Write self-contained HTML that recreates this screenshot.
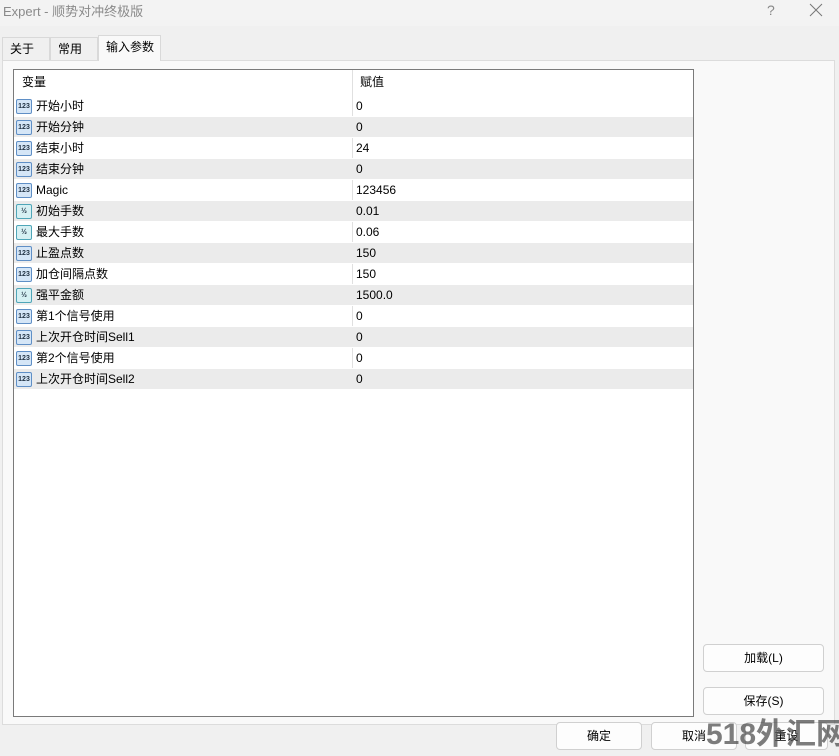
<!DOCTYPE html>
<html><head><meta charset="utf-8"><style>
*{margin:0;padding:0;box-sizing:border-box}
body{width:839px;height:756px;background:#f0f0f0;font-family:"Liberation Sans","Noto Sans CJK SC",sans-serif;font-size:12px;color:#000;position:relative;overflow:hidden}
.title{position:absolute;left:0;top:0;width:839px;height:26px;background:#f3f3f3;color:#8a8a8a;font-size:13px;line-height:24px;padding-left:3px}
.q{position:absolute;left:767px;top:2px;color:#888;font-size:14px}
.x{position:absolute;left:809px;top:3px;width:14px;height:14px}
.tab{position:absolute;top:37px;height:24px;line-height:22px;border:1px solid #d9d9d9;border-bottom:none;background:#f0f0f0;padding-left:7px}
.panel{position:absolute;left:2px;top:60px;width:833px;height:665px;background:#f9f9f9;border:1px solid #dcdcdc}
.tbl{position:absolute;left:13px;top:69px;width:681px;height:648px;background:#fff;border:1px solid #7a7a7a}
.hd{position:absolute;left:0;top:0;width:679px;height:25px;line-height:25px}
.row{position:absolute;left:0;width:679px;height:21px;line-height:21px;border-bottom:1px solid #fff}
.row.g{background:#ebebeb}
.c1{position:absolute;left:22px}
.c2{position:absolute;left:342px}
.sep{position:absolute;left:338px;top:0;width:1px;height:320px;background:#e0e0e0}
.ic{position:absolute;left:2px;top:3px;width:16px;height:15px;border:1px solid #5f8fc6;background:#d5e6f7;border-radius:2px;font-size:7px;line-height:13px;text-align:center;color:#234;font-weight:bold}
.ic.v{border-color:#4fa6b8;background:#d6f0f3}
.btn{position:absolute;height:28px;background:#fdfdfd;border:1px solid #d0d0d0;border-radius:4px;text-align:center;line-height:26px}
.wm{position:absolute;left:706px;top:715px;font-size:30px;font-weight:bold;color:rgba(80,80,80,.75);white-space:nowrap;line-height:40px}
</style></head><body>
<div class="title">Expert - 顺势对冲终极版</div>
<div class="q">?</div>
<svg class="x" viewBox="0 0 14 14"><path d="M1 1L13 13M13 1L1 13" stroke="#777" stroke-width="1"/></svg>
<div class="tab" style="left:2px;width:48px">关于</div>
<div class="tab" style="left:50px;width:48px">常用</div>
<div class="panel"></div>
<div class="tab" style="left:98px;top:35px;width:63px;height:26px;background:#f9f9f9;z-index:2">输入参数</div>
<div class="tbl">
<div class="sep"></div>
<div class="hd"><span class="c1" style="left:8px">变量</span><span class="c2" style="left:346px">赋值</span></div>
<div class="row" style="top:26px"><div class="ic">123</div><span class="c1">开始小时</span><span class="c2">0</span></div>
<div class="row g" style="top:47px"><div class="ic">123</div><span class="c1">开始分钟</span><span class="c2">0</span></div>
<div class="row" style="top:68px"><div class="ic">123</div><span class="c1">结束小时</span><span class="c2">24</span></div>
<div class="row g" style="top:89px"><div class="ic">123</div><span class="c1">结束分钟</span><span class="c2">0</span></div>
<div class="row" style="top:110px"><div class="ic">123</div><span class="c1">Magic</span><span class="c2">123456</span></div>
<div class="row g" style="top:131px"><div class="ic v">½</div><span class="c1">初始手数</span><span class="c2">0.01</span></div>
<div class="row" style="top:152px"><div class="ic v">½</div><span class="c1">最大手数</span><span class="c2">0.06</span></div>
<div class="row g" style="top:173px"><div class="ic">123</div><span class="c1">止盈点数</span><span class="c2">150</span></div>
<div class="row" style="top:194px"><div class="ic">123</div><span class="c1">加仓间隔点数</span><span class="c2">150</span></div>
<div class="row g" style="top:215px"><div class="ic v">½</div><span class="c1">强平金额</span><span class="c2">1500.0</span></div>
<div class="row" style="top:236px"><div class="ic">123</div><span class="c1">第1个信号使用</span><span class="c2">0</span></div>
<div class="row g" style="top:257px"><div class="ic">123</div><span class="c1">上次开仓时间Sell1</span><span class="c2">0</span></div>
<div class="row" style="top:278px"><div class="ic">123</div><span class="c1">第2个信号使用</span><span class="c2">0</span></div>
<div class="row g" style="top:299px"><div class="ic">123</div><span class="c1">上次开仓时间Sell2</span><span class="c2">0</span></div>
</div>
<div class="btn" style="left:703px;top:644px;width:121px">加载(L)</div>
<div class="btn" style="left:703px;top:687px;width:121px">保存(S)</div>
<div class="btn" style="left:556px;top:722px;width:86px">确定</div>
<div class="btn" style="left:651px;top:722px;width:86px">取消</div>
<div class="btn" style="left:745px;top:722px;width:83px">重设</div>
<div class="wm">518外汇网</div>
</body></html>
